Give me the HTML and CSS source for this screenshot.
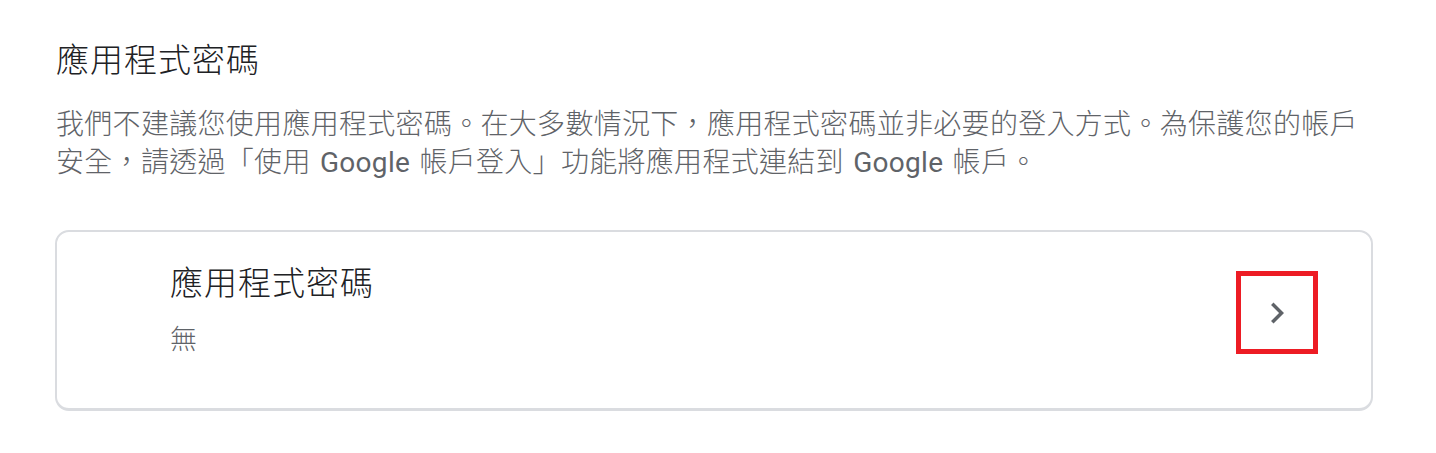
FILE: index.html
```html
<!DOCTYPE html>
<html lang="zh-TW">
<head>
<meta charset="utf-8">
<link rel="stylesheet" href="styles.css">
</head>
<body>
<main class="page">
  <h1 class="title">應用程式密碼</h1>
  <p class="desc">我們不建議您使用應用程式密碼。在大多數情況下，應用程式密碼並非必要的登入方式。為保護您的帳戶安全，請透過「使用<span class="latin"> Google </span>帳戶登入」功能將應用程式連結到<span class="latin"> Google </span>帳戶。</p>
  <section class="card">
    <div class="card-text">
      <div class="card-title">應用程式密碼</div>
      <div class="card-sub">無</div>
    </div>
    <button class="chev-btn" aria-label="應用程式密碼">
      <svg class="chev" viewBox="0 0 24 24" width="42" height="42"><path d="M10 6L8.59 7.41 13.17 12l-4.58 4.59L10 18l6-6z"/></svg>
    </button>
  </section>
</main>
</body>
</html>
```

FILE: styles.css
```css
html, body {
  margin: 0;
  padding: 0;
  background: #ffffff;
}
body {
  font-family: "Noto Sans CJK TC", "Noto Sans", sans-serif;
  font-weight: 300;
  font-feature-settings: "locl" 1;
}
.latin {
  font-family: Roboto, "Noto Sans", sans-serif;
  font-weight: 400;
  line-height: 1;
  word-spacing: 2px;
}
.page {
  margin-left: 55px;
  width: 1318px;
  padding-top: 36px;
}
.title {
  margin: 0 0 0 1px;
  font-size: 33px;
  line-height: 44px;
  font-weight: 300;
  color: #202124;
  letter-spacing: 1px;
}
.desc {
  margin: 23px 0 0 1px;
  font-size: 28px;
  line-height: 38px;
  color: #5f6368;
  letter-spacing: 0.3px;
  width: 1312px;
}
.card {
  margin-top: 51px;
  box-sizing: border-box;
  height: 181px;
  border: 2px solid #dadce0;
  border-bottom-width: 3px;
  border-radius: 14px;
  display: flex;
  align-items: flex-start;
  justify-content: space-between;
  padding: 0 53px 0 113px;
}
.card-text {
  display: flex;
  flex-direction: column;
  padding-top: 27px;
}
.card-title {
  font-size: 33px;
  line-height: 44px;
  color: #202124;
  letter-spacing: 1px;
}
.card-sub {
  margin-top: 16px;
  font-size: 27px;
  line-height: 38px;
  color: #5f6368;
}
.chev-btn {
  box-sizing: border-box;
  width: 82px;
  height: 83px;
  border: 5px solid #ed1c24;
  background: transparent;
  padding: 0;
  margin-top: 39px;
  display: flex;
  align-items: center;
  justify-content: center;
  cursor: pointer;
}
.chev {
  fill: #5f6368;
  display: block;
}
```
